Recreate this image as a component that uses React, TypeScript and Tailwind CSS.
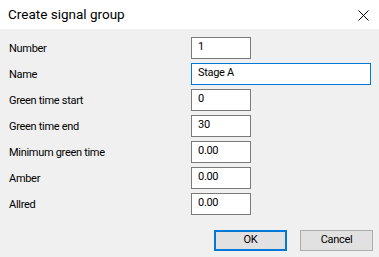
const fields = [
  { label: "Number", value: "1", wide: false, focused: false },
  { label: "Name", value: "Stage A", wide: true, focused: true },
  { label: "Green time start", value: "0", wide: false, focused: false },
  { label: "Green time end", value: "30", wide: false, focused: false },
  { label: "Minimum green time", value: "0.00", wide: false, focused: false },
  { label: "Amber", value: "0.00", wide: false, focused: false },
  { label: "Allred", value: "0.00", wide: false, focused: false },
];

export default function App() {
  return (
    <div
      className="flex h-[257px] w-[379px] flex-col overflow-hidden bg-[#f0f0f0] text-[11px] tracking-[-0.3px] text-black"
      style={{ fontFamily: '"Segoe UI", Roboto, "Liberation Sans", sans-serif' }}
    >
      {/* Title bar */}
      <div className="flex h-[29px] shrink-0 items-center justify-between bg-white pl-2 pr-[10px]">
        <span className="text-[13.5px] leading-none tracking-normal">Create signal group</span>
        <svg width="11" height="11" viewBox="0 0 11 11" className="mt-[1px]">
          <path d="M0.5 0.5 L10.5 10.5 M10.5 0.5 L0.5 10.5" stroke="#000" strokeWidth="1" />
        </svg>
      </div>

      {/* Form */}
      <div className="flex flex-col gap-1 pl-2 pt-2">
        {fields.map((f) => (
          <div key={f.label} className="flex h-[22px] items-center">
            <span className="w-[183px] shrink-0 pl-px pt-[2px]">{f.label}</span>
            <div
              className={
                f.focused
                  ? "flex h-[22px] w-[180px] items-center border border-[#0078d7] bg-white pb-px pl-[6px]"
                  : f.wide
                    ? "flex h-[22px] w-[180px] items-center border border-[#7a7a7a] bg-white pb-px pl-[6px]"
                    : "flex h-[22px] w-[60px] items-center border border-[#7a7a7a] bg-white pb-px pl-[6px]"
              }
            >
              {f.value}
            </div>
          </div>
        ))}
      </div>

      {/* Buttons */}
      <div className="mt-[15px] flex justify-end gap-[13px] pr-[6px]">
        <button className="flex h-[21px] w-[73px] items-center justify-center border-2 border-[#0078d7] bg-[#e1e1e1]">
          OK
        </button>
        <button className="flex h-[21px] w-[73px] items-center justify-center border border-[#adadad] bg-[#e1e1e1]">
          Cancel
        </button>
      </div>
    </div>
  );
}
